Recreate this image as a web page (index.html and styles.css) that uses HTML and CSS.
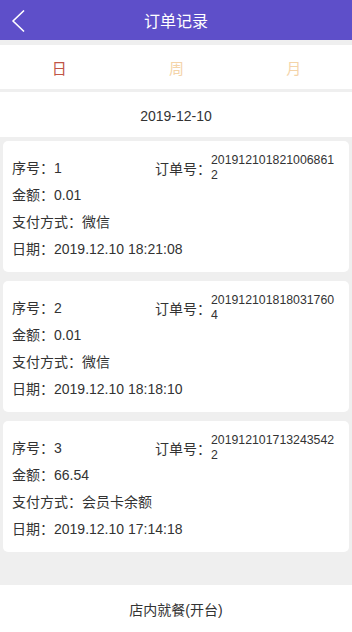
FILE: index.html
```
<!doctype html>
<html>
  <head>
    <meta charset="utf-8">
    <link rel="stylesheet" href="styles.css">
  </head>
  <body>
    <div class="page">
      <div class="topbar">
        <div class="back">
          <svg width="14" height="22" viewBox="0 0 14 22"><polyline points="12.5,1 2,11 12.5,21" fill="none" stroke="#fff" stroke-width="1.7" stroke-linecap="round" stroke-linejoin="round"/></svg>
        </div>
        <div class="title">订单记录</div>
        <div></div>
      </div>

      <div class="tabs">
        <div class="tab active">日</div>
        <div class="tab">周</div>
        <div class="tab">月</div>
      </div>

      <div class="date-row">2019-12-10</div>

      <div class="list">
        <div class="card">
          <div class="row">
            <div class="cell-left">序号：1</div>
            <div class="order">订单号：<span class="order-no">2019121018210068612</span></div>
          </div>
          <div class="row">金额：0.01</div>
          <div class="row">支付方式：微信</div>
          <div class="row">日期：2019.12.10 18:21:08</div>
        </div>

        <div class="card">
          <div class="row">
            <div class="cell-left">序号：2</div>
            <div class="order">订单号：<span class="order-no">2019121018180317604</span></div>
          </div>
          <div class="row">金额：0.01</div>
          <div class="row">支付方式：微信</div>
          <div class="row">日期：2019.12.10 18:18:10</div>
        </div>

        <div class="card">
          <div class="row">
            <div class="cell-left">序号：3</div>
            <div class="order">订单号：<span class="order-no">2019121017132435422</span></div>
          </div>
          <div class="row">金额：66.54</div>
          <div class="row">支付方式：会员卡余额</div>
          <div class="row">日期：2019.12.10 17:14:18</div>
        </div>
      </div>

      <div class="bottom-bar">店内就餐(开台)</div>
    </div>
  </body>
</html>
```

FILE: styles.css
```
html, body {
  margin: 0;
  padding: 0;
}

body {
  background-color: #efefef;
  font-family: "Liberation Sans", "Noto Sans CJK SC", sans-serif;
  color: #333333;
}

.page {
  width: 352px;
  height: 632px;
  display: flex;
  flex-direction: column;
  overflow: hidden;
}

.topbar {
  height: 40px;
  background-color: #5e4fc9;
  display: grid;
  grid-template-columns: 40px 1fr 40px;
  align-items: center;
  color: white;
}

.back {
  display: flex;
  align-items: center;
  padding-left: 11px;
  padding-top: 1px;
}

.title {
  text-align: center;
  font-size: 16px;
}

.tabs {
  margin-top: 5px;
  height: 44px;
  background-color: white;
  display: grid;
  grid-template-columns: 1fr 1fr 1fr;
  align-items: center;
}

.tab {
  text-align: center;
  font-size: 15px;
  color: #f4d4a9;
  padding-left: 1px;
}

.tab.active {
  color: #c05546;
}

.date-row {
  margin-top: 3px;
  height: 45px;
  background-color: white;
  display: flex;
  align-items: center;
  justify-content: center;
  font-size: 14px;
  padding-top: 2px;
  box-sizing: border-box;
}

.list {
  flex: 1;
  padding: 4px 3px 0 3px;
  display: flex;
  flex-direction: column;
  gap: 9px;
}

.card {
  background-color: white;
  border-radius: 5px;
  padding: 12px 9px 11px 9px;
  font-size: 14px;
}

.row {
  height: 27px;
  display: flex;
  align-items: center;
}

.cell-left {
  width: 143px;
}

.order {
  display: flex;
  align-items: center;
  padding-top: 2px;
}

.order-no {
  width: 127px;
  font-size: 12.3px;
  line-height: 15px;
  word-break: break-all;
}

.bottom-bar {
  height: 47px;
  background-color: white;
  display: flex;
  align-items: center;
  justify-content: center;
  font-size: 14px;
}
```
